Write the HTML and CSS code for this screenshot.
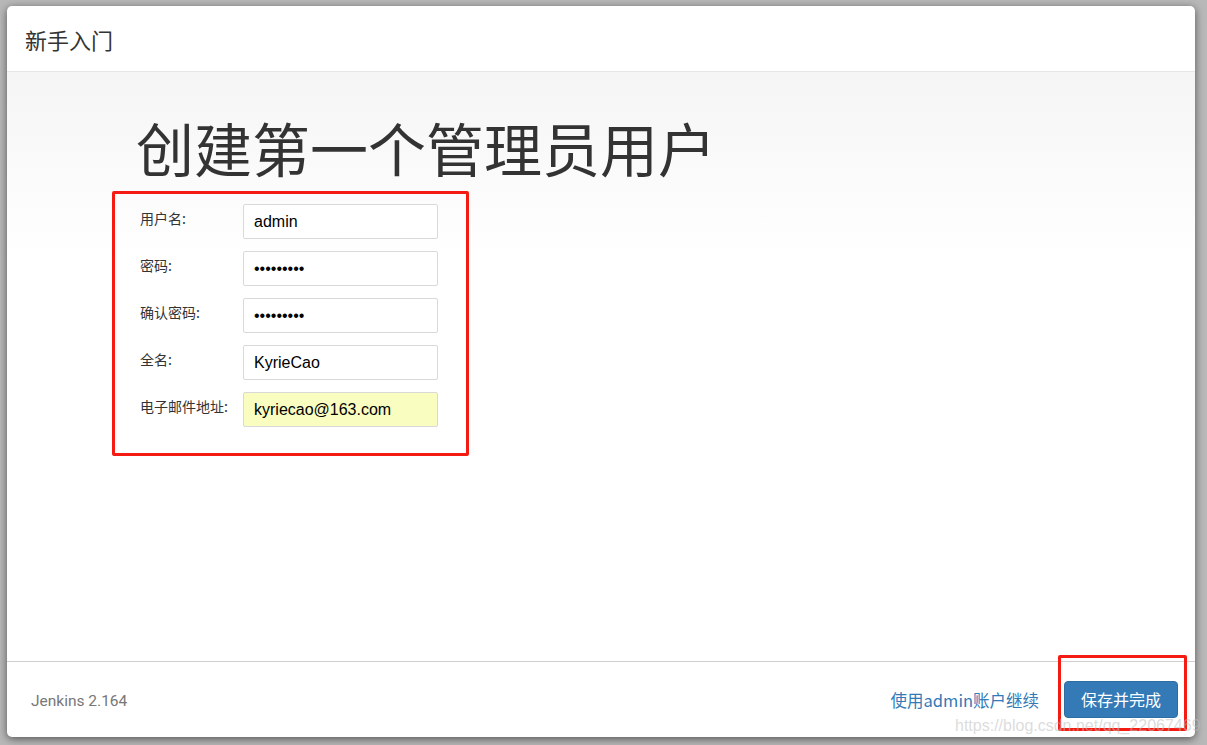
FILE: index.html
```html
<!DOCTYPE html>
<html lang="zh-CN">
<head>
    <meta charset="UTF-8">
    <title>新手入门</title>
    <link rel="stylesheet" href="styles.css">
</head>
<body>

    <div class="modal">
        <div class="modal-header">
            <h4 class="modal-title">新手入门</h4>
        </div>

        <div class="modal-body">
            <h1 class="page-title">创建第一个管理员用户</h1>

            <!-- red box is the annotation from the original screenshot -->
            <form class="user-form">
                <div class="form-row">
                    <label for="username">用户名:</label>
                    <input type="text" id="username" value="admin">
                </div>
                <div class="form-row">
                    <label for="password1">密码:</label>
                    <input type="password" id="password1" value="123456789">
                </div>
                <div class="form-row">
                    <label for="password2">确认密码:</label>
                    <input type="password" id="password2" value="123456789">
                </div>
                <div class="form-row">
                    <label for="fullname">全名:</label>
                    <input type="text" id="fullname" value="KyrieCao">
                </div>
                <div class="form-row">
                    <label for="email">电子邮件地址:</label>
                    <input type="text" id="email" class="autofill" value="kyriecao@163.com">
                </div>
            </form>
        </div>

        <div class="modal-footer">
            <div class="version">Jenkins 2.164</div>
            <a href="#" class="skip-link">使用admin账户继续</a>
            <div class="save-box">
                <button type="button" class="btn-save">保存并完成</button>
            </div>
        </div>
    </div>

    <div class="watermark">https://blog.csdn.net/qq_22067469</div>

</body>
</html>
```

FILE: styles.css
```css
body {
    margin: 0;
    padding: 6px 12px 8px 7px;
    background: #b8b8b8;
    font-family: "Liberation Sans", Arial, "Noto Sans CJK SC", sans-serif;
    color: #333;
}

.modal {
    width: 1188px;
    height: 731px;
    background: #fff;
    border-radius: 5px;
    box-shadow: 0 2px 8px rgba(0, 0, 0, 0.55);
    display: flex;
    flex-direction: column;
    overflow: hidden;
}

.modal-header {
    height: 66px;
    border-bottom: 1px solid #e5e5e5;
    display: flex;
    align-items: center;
    padding-left: 18px;
    box-sizing: border-box;
}

.modal-title {
    margin: 0;
    font-family: "Noto Sans CJK SC", sans-serif;
    font-weight: normal;
    font-size: 22px;
    color: #333;
}

.modal-body {
    flex: 1;
    background: linear-gradient(#f5f5f5, #fff 190px);
    padding: 43px 0 0 105px;
}

.page-title {
    margin: 0 0 12px 24px;
    font-family: "Noto Sans CJK SC", sans-serif;
    font-weight: normal;
    font-size: 58px;
    line-height: 64px;
    color: #333;
}

.user-form {
    width: 300px;
    border: 3px solid #f41c12;
    border-radius: 2px;
    padding: 10px 26px 26px 25px;
    display: flex;
    flex-direction: column;
    gap: 12px;
}

.form-row {
    display: flex;
}

.form-row label {
    width: 103px;
    flex-shrink: 0;
    padding-top: 4px;
    font-family: "Noto Sans CJK SC", sans-serif;
    font-size: 14px;
    line-height: 20px;
    color: #333;
}

.form-row input {
    width: 195px;
    height: 35px;
    box-sizing: border-box;
    border: 1px solid #d9d9d9;
    border-radius: 2px;
    padding: 0 10px;
    font-family: "Liberation Sans", Arial, sans-serif;
    font-size: 16px;
    color: #000;
    background: #fff;
    outline: none;
}

.form-row input.autofill {
    background: #fafdc0;
}

.modal-footer {
    height: 76px;
    border-top: 1px solid #cfcfcf;
    box-sizing: border-box;
    display: flex;
    align-items: center;
    padding: 0 8px 0 24px;
}

.version {
    flex: 1;
    font-family: Roboto, "Liberation Sans", sans-serif;
    font-size: 15.5px;
    color: #777;
    padding-top: 2px;
}

.skip-link {
    font-family: "Noto Sans CJK SC", sans-serif;
    font-size: 16.5px;
    color: #337ab7;
    text-decoration: none;
    margin-right: 19px;
}

.save-box {
    border: 3px solid #f41c12;
    border-radius: 2px;
    padding: 23px 6px 10px 3px;
    margin-top: -14px;
}

.btn-save {
    display: block;
    height: 37px;
    padding: 0 16px;
    border: 1px solid #2e6da4;
    border-radius: 4px;
    background: #337ab7;
    color: #fff;
    font-family: "Noto Sans CJK SC", sans-serif;
    font-size: 16px;
    cursor: pointer;
}

.watermark {
    position: absolute;
    left: 955px;
    top: 717px;
    white-space: nowrap;
    font-family: "Liberation Sans", Arial, sans-serif;
    font-size: 16px;
    line-height: 18px;
    color: rgba(190, 190, 190, 0.55);
    pointer-events: none;
}
```
